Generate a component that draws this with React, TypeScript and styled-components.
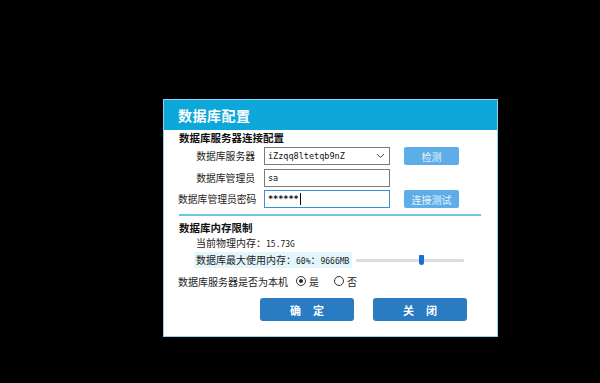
import React from 'react'
import styled, { createGlobalStyle } from 'styled-components'

const GlobalStyle = createGlobalStyle`
  html, body {
    margin: 0;
    padding: 0;
    background: #000;
  }
  body {
    font-family: "Noto Sans CJK SC", "Noto Sans", sans-serif;
  }
`

const Page = styled('div')`
  width: 600px;
  height: 383px;
  background: #000;
  padding: 99px 0 0 163px;
  box-sizing: border-box;
`

const Dialog = styled('div')`
  width: 335px;
  height: 238px;
  box-sizing: border-box;
  background: #fff;
  border: 1px solid #8fd0e8;
  display: flex;
  flex-direction: column;
`

const Header = styled('div')`
  height: 30px;
  background: #0ea7d9;
  color: #fff;
  font-size: 14px;
  font-weight: bold;
  display: flex;
  align-items: center;
  padding-left: 14px;
  letter-spacing: 0.5px;
`

const Body = styled('div')`
  padding: 0 16px 0 14px;
  display: flex;
  flex-direction: column;
`

const SectionTitle = styled('div')`
  font-size: 10.5px;
  font-weight: bold;
  color: #111;
  height: 15px;
  line-height: 15px;
  padding-left: 1px;
`

const FormRow = styled('div')`
  display: grid;
  grid-template-columns: 79px 126px 62px;
  column-gap: 7px;
  align-items: center;
  height: 18px;
  margin-top: ${(p: { $gap: number }) => p.$gap}px;
`

const Label = styled('div')`
  font-size: 9.8px;
  color: #1a1a1a;
  text-align: right;
  white-space: nowrap;
  padding-right: 2px;
`

const Field = styled('div')<{ $focus?: boolean }>`
  height: 18px;
  box-sizing: border-box;
  border: 1px solid ${(p) => (p.$focus ? '#3a8fd8' : '#7a7a7a')};
  display: flex;
  align-items: center;
  padding: 0 4px 0 3px;
  font-family: "DejaVu Sans Mono", "Liberation Mono", monospace;
  font-size: 8.5px;
  color: #111;
  justify-content: space-between;
`

const Stars = styled('span')`
  font-weight: bold;
`

const Caret = styled('span')`
  display: inline-block;
  width: 1px;
  height: 12px;
  background: #000;
  margin-left: 1px;
  vertical-align: middle;
`

const SmallButton = styled('div')`
  height: 18px;
  margin-left: 7px;
  background: #5daee8;
  color: #e6f2fb;
  font-size: 10px;
  display: flex;
  align-items: center;
  justify-content: center;
  border-radius: 2px;
`

const Separator = styled('div')`
  height: 2px;
  background: #6fc6e3;
  margin: 6px 0 4px 1px;
`

const InfoLine = styled('div')<{ $hl?: boolean }>`
  margin-left: 16px;
  height: 16px;
  display: flex;
  align-items: center;
  font-size: 10px;
  color: #222;
  margin-top: ${(p) => (p.$hl ? 1 : 0)}px;
`

const InfoText = styled('span')<{ $hl?: boolean }>`
  background: ${(p) => (p.$hl ? '#e3f6fb' : 'transparent')};
  padding: 0 2px;
  width: ${(p) => (p.$hl ? '158px' : 'auto')};
  box-sizing: border-box;
  white-space: nowrap;
  height: 16px;
  line-height: 16px;
`

const Mono = styled('span')`
  font-family: "DejaVu Sans Mono", "Liberation Mono", monospace;
  font-size: 8px;
`

const SliderTrack = styled('div')`
  position: relative;
  margin-left: 4px;
  width: 108px;
  height: 3px;
  background: #dcdcdc;
  border-radius: 1px;
`

const SliderThumb = styled('div')`
  position: absolute;
  top: -4px;
  width: 5px;
  height: 10px;
  background: #1b6fd4;
  border-radius: 1px 1px 3px 3px;
`

const RadioRow = styled('div')`
  display: flex;
  align-items: center;
  height: 16px;
  margin-top: 5px;
  font-size: 10px;
  color: #222;
`

const RadioOption = styled('div')`
  display: flex;
  align-items: center;
  gap: 3px;
  margin-left: ${(p: { $ml: number }) => p.$ml}px;
`

const RadioCircle = styled('span')<{ $on?: boolean }>`
  width: 10px;
  height: 10px;
  box-sizing: border-box;
  border: 1px solid #333;
  border-radius: 50%;
  display: flex;
  align-items: center;
  justify-content: center;
  &::after {
    content: '';
    width: 4px;
    height: 4px;
    border-radius: 50%;
    background: ${(p) => (p.$on ? '#222' : 'transparent')};
  }
`

const ButtonRow = styled('div')`
  display: flex;
  gap: 19px;
  margin: 9px 0 0 82px;
`

const MainButton = styled('div')`
  width: 94px;
  height: 23px;
  background: #2a7cc2;
  border-radius: 3px;
  color: #fff;
  font-size: 11px;
  font-weight: bold;
  display: flex;
  align-items: center;
  justify-content: center;
  letter-spacing: 12px;
  padding-left: 12px;
  box-sizing: border-box;
`

const Chevron = () => (
  <svg width="9" height="6" viewBox="0 0 9 6">
    <path d="M1 1 L4.5 4.5 L8 1" fill="none" stroke="#444" strokeWidth="1" />
  </svg>
)

const App = () => {
  const usage = 0.6
  return (
    <Page>
      <GlobalStyle />
      <Dialog>
        <Header>数据库配置</Header>
        <Body>
          <SectionTitle>数据库服务器连接配置</SectionTitle>
          <FormRow $gap={2}>
            <Label>数据库服务器</Label>
            <Field>
              <span>iZzqq8ltetqb9nZ</span>
              <Chevron />
            </Field>
            <SmallButton>检测</SmallButton>
          </FormRow>
          <FormRow $gap={4}>
            <Label>数据库管理员</Label>
            <Field>
              <span>sa</span>
            </Field>
            <span />
          </FormRow>
          <FormRow $gap={3}>
            <Label>数据库管理员密码</Label>
            <Field $focus>
              <span>
                <Stars>******</Stars>
                <Caret />
              </span>
            </Field>
            <SmallButton>连接测试</SmallButton>
          </FormRow>
          <Separator />
          <SectionTitle>数据库内存限制</SectionTitle>
          <InfoLine>
            <InfoText>
              当前物理内存：<Mono>15.73G</Mono>
            </InfoText>
          </InfoLine>
          <InfoLine $hl>
            <InfoText $hl>
              数据库最大使用内存：<Mono>60%</Mono>：<Mono>9666MB</Mono>
            </InfoText>
            <SliderTrack>
              <SliderThumb style={{ left: `${usage * 108 - 2}px` }} />
            </SliderTrack>
          </InfoLine>
          <RadioRow>
            <span>数据库服务器是否为本机</span>
            <RadioOption $ml={8}>
              <RadioCircle $on />
              是
            </RadioOption>
            <RadioOption $ml={15}>
              <RadioCircle />
              否
            </RadioOption>
          </RadioRow>
          <ButtonRow>
            <MainButton>确定</MainButton>
            <MainButton>关闭</MainButton>
          </ButtonRow>
        </Body>
      </Dialog>
    </Page>
  )
}

export default App
